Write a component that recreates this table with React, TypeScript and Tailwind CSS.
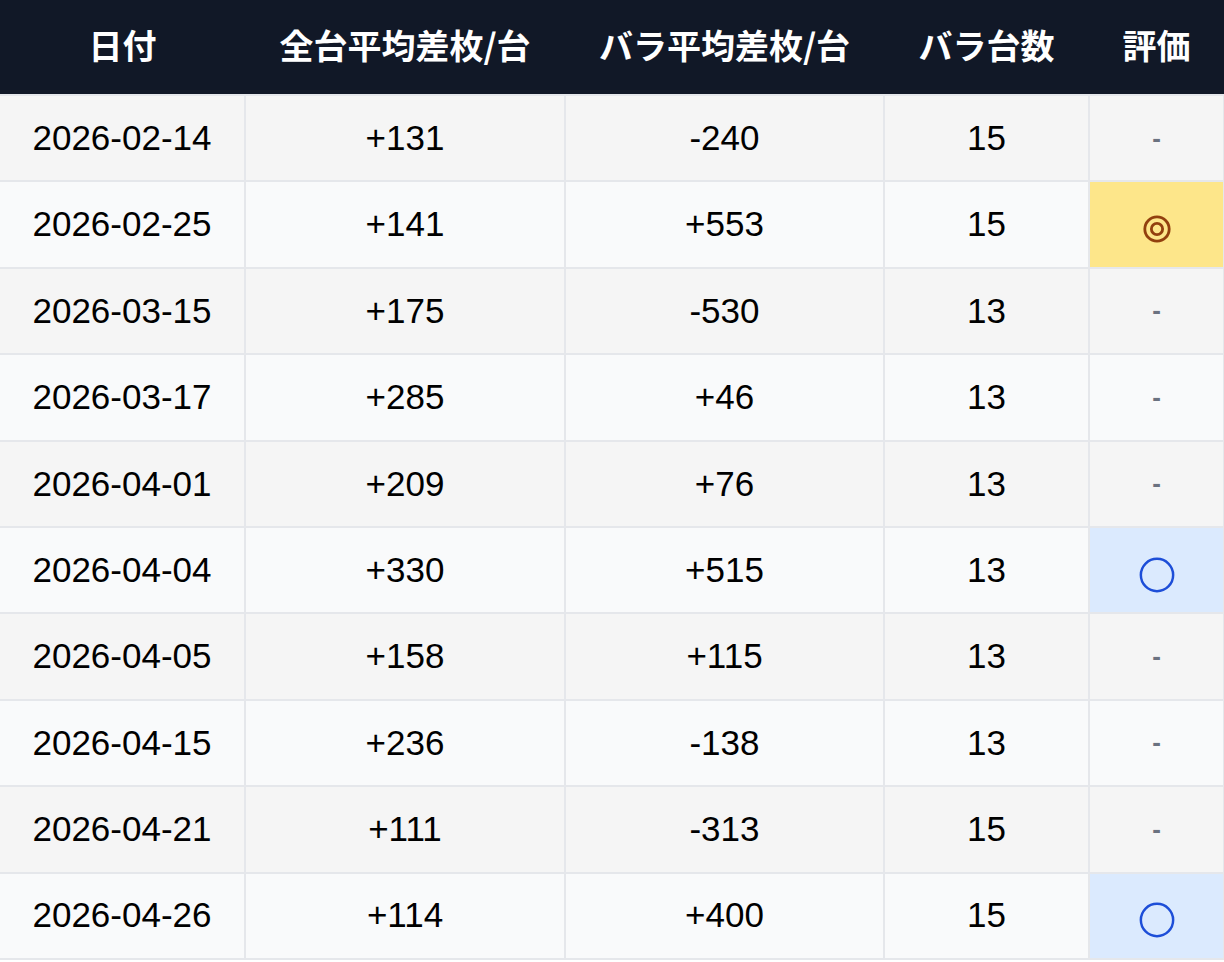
type Mark = "-" | "◎" | "○";

type Row = {
  date: string;
  all: string;
  bara: string;
  count: number;
  mark: Mark;
};

const rows: Row[] = [
  { date: "2026-02-14", all: "+131", bara: "-240", count: 15, mark: "-" },
  { date: "2026-02-25", all: "+141", bara: "+553", count: 15, mark: "◎" },
  { date: "2026-03-15", all: "+175", bara: "-530", count: 13, mark: "-" },
  { date: "2026-03-17", all: "+285", bara: "+46", count: 13, mark: "-" },
  { date: "2026-04-01", all: "+209", bara: "+76", count: 13, mark: "-" },
  { date: "2026-04-04", all: "+330", bara: "+515", count: 13, mark: "○" },
  { date: "2026-04-05", all: "+158", bara: "+115", count: 13, mark: "-" },
  { date: "2026-04-15", all: "+236", bara: "-138", count: 13, mark: "-" },
  { date: "2026-04-21", all: "+111", bara: "-313", count: 15, mark: "-" },
  { date: "2026-04-26", all: "+114", bara: "+400", count: 15, mark: "○" },
];

const headers = ["日付", "全台平均差枚/台", "バラ平均差枚/台", "バラ台数", "評価"];
const widths = ["w-[245px]", "w-[320px]", "w-[319px]", "w-[205px]", "w-[135px]"];

const cell = "border-2 border-[#e5e7eb] text-center align-middle h-[86.4px] p-0";

const MarkCell = ({ mark }: { mark: Mark }) => {
  if (mark === "◎") {
    return (
      <td className={`${cell} bg-[#fde68a]`}>
        <svg viewBox="0 0 32 32" className="w-[30px] h-[30px] inline-block mt-1 text-[#92400e]" fill="none" stroke="currentColor" strokeWidth="3">
          <circle cx="16" cy="16" r="13" />
          <circle cx="16" cy="16" r="6" />
        </svg>
      </td>
    );
  }
  if (mark === "○") {
    return (
      <td className={`${cell} bg-[#dbeafe]`}>
        <svg viewBox="0 0 40 40" className="w-[38px] h-[38px] inline-block mt-1 text-[#1d4ed8]" fill="none" stroke="currentColor" strokeWidth="2.6">
          <circle cx="20" cy="20" r="17" />
        </svg>
      </td>
    );
  }
  return <td className={`${cell} text-[#6b7280] text-[26px] font-bold`}>-</td>;
};

export default function App() {
  return (
    <div className="w-[1224px] bg-white" style={{ fontFamily: '"Liberation Sans", "Noto Sans CJK JP", sans-serif' }}>
      <table className="w-full border-collapse table-fixed text-[35px] text-black">
        <thead>
          <tr className="bg-[#111827] h-[95px]">
            {headers.map((h, i) => (
              <th
                key={h}
                className={`${widths[i]} text-white font-bold text-[34px] text-center p-0 pb-[5px]`}
                style={{ fontFamily: '"Noto Sans CJK JP", "Liberation Sans", sans-serif' }}
              >
                {h}
              </th>
            ))}
          </tr>
        </thead>
        <tbody>
          {rows.map((r, i) => (
            <tr key={r.date} className={i % 2 === 0 ? "bg-[#f5f5f5]" : "bg-[#f9fafb]"}>
              <td className={`${cell} border-l-0`}>{r.date}</td>
              <td className={cell}>{r.all}</td>
              <td className={cell}>{r.bara}</td>
              <td className={cell}>{r.count}</td>
              <MarkCell mark={r.mark} />
            </tr>
          ))}
        </tbody>
      </table>
    </div>
  );
}
